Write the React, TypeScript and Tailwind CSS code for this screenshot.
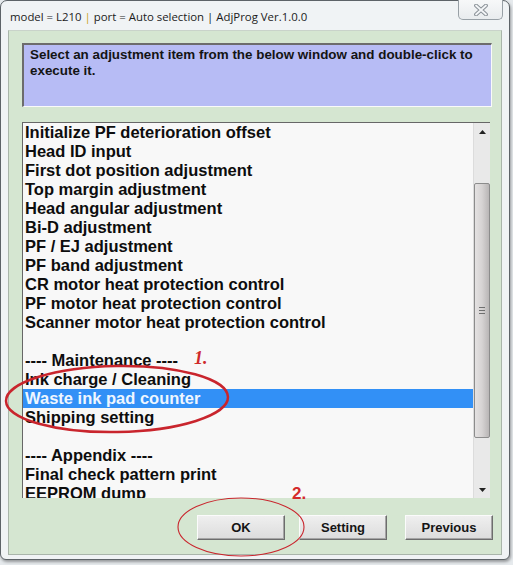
import React from 'react';

const items = [
  'Initialize PF deterioration offset',
  'Head ID input',
  'First dot position adjustment',
  'Top margin adjustment',
  'Head angular adjustment',
  'Bi-D adjustment',
  'PF / EJ adjustment',
  'PF band adjustment',
  'CR motor heat protection control',
  'PF motor heat protection control',
  'Scanner motor heat protection control',
  '',
  '---- Maintenance ----',
  'Ink charge / Cleaning',
  'Waste ink pad counter',
  'Shipping setting',
  '',
  '---- Appendix ----',
  'Final check pattern print',
  'EEPROM dump',
];

const SELECTED = 'Waste ink pad counter';

function CloseGlyph() {
  return (
    <svg width="16" height="12" viewBox="0 0 16 12">
      <path d="M3 1.5 L13 10.5 M13 1.5 L3 10.5" stroke="#8a9197" strokeWidth="3.8" strokeLinecap="round" />
      <path d="M3 1.5 L13 10.5 M13 1.5 L3 10.5" stroke="#f4f6f8" strokeWidth="1.8" strokeLinecap="round" />
    </svg>
  );
}

function Button({ label, className = '' }: { label: string; className?: string }) {
  return (
    <div
      className={`flex h-[25px] w-[88px] items-center justify-center border border-t-[#fbfbfb] border-l-[#fbfbfb] border-b-[#6d6d6d] border-r-[#6d6d6d] bg-gradient-to-b from-[#efefef] to-[#dcdcdc] text-[13px] font-bold text-[#151515] shadow-[inset_-1px_-1px_0_#a5a5a5] ${className}`}
    >
      {label}
    </div>
  );
}

export default function App() {
  return (
    <div
      className="relative h-[565px] w-[513px] overflow-hidden bg-[#e6eaed]"
      style={{ fontFamily: '"Liberation Sans", Arial, sans-serif' }}
    >
      {/* Window */}
      <div className="flex h-[560px] w-[510px] flex-col rounded-t-[7px] rounded-b-[6px] border border-[#5d6368] bg-[#f0f3f5] shadow-[1px_2px_3px_rgba(0,0,0,0.35)]">
        {/* Title bar */}
        <div className="flex h-[29px] items-start justify-between pl-[9px] pr-[6px]">
          <div
            className="pt-[9px] text-[11.4px] leading-[14px] text-[#1b1b1b]"
            style={{ fontFamily: '"Open Sans", "Noto Sans", sans-serif' }}
          >
            model = L210 <span className="text-[#c9a227]">|</span> port = Auto selection | AdjProg Ver.1.0.0
          </div>
          <div className="-mt-px flex h-[20px] w-[45px] items-center justify-center rounded-b-[5px] border border-t-0 border-[#98a0a6] bg-gradient-to-b from-[#f7f8f9] to-[#e9ecee]">
            <CloseGlyph />
          </div>
        </div>

        {/* Client area */}
        <div className="mx-[7px] mb-[4px] flex flex-1 flex-col border border-[#a9b5aa] border-t-[#c9d3ca] bg-[#d5e6d1]">
          {/* Info box */}
          <div className="ml-[13px] mt-[12px] h-[64px] w-[470px] border-l-2 border-t-2 border-b border-r border-l-[#6c6c6c] border-t-[#6c6c6c] border-b-[#fafafa] border-r-[#fafafa] bg-[#b7bcf5] pl-[6px] pr-[10px] pt-[2px]">
            <p className="text-[13.4px] font-bold leading-[15.5px] text-[#141414]">
              Select an adjustment item from the below window and double-click to execute it.
            </p>
          </div>

          {/* List box */}
          <div className="ml-[13px] mt-[15px] flex h-[376px] w-[468px] border-l border-t border-[#676767] bg-[#f8f8f8]">
            <div className="flex-1 overflow-hidden">
              {items.map((item, i) => (
                <div
                  key={i}
                  className={`h-[19px] whitespace-nowrap pl-[2px] text-[16.5px] font-bold leading-[19px] ${
                    item === SELECTED ? 'bg-[#3290f6] text-[#eef6ff]' : 'text-[#0d0d0d]'
                  }`}
                >
                  {item}
                </div>
              ))}
            </div>

            {/* Scrollbar */}
            <div className="flex w-[17px] flex-col border-l border-[#dcdcdc] bg-[#e9e9e9]">
              <div className="flex h-[17px] items-center justify-center">
                <svg width="7" height="4" viewBox="0 0 7 4">
                  <path d="M0 4 L3.5 0 L7 4 Z" fill="#222" />
                </svg>
              </div>
              <div className="h-[43px]" />
              <div className="flex h-[255px] items-center justify-center rounded-[2px] border border-[#8c8c8c] bg-gradient-to-r from-[#e4e2e2] via-[#d6d3d3] to-[#b9b6b6]">
                <div className="flex flex-col gap-[2px]">
                  <div className="h-px w-[6px] bg-[#6f6f6f]" />
                  <div className="h-px w-[6px] bg-[#6f6f6f]" />
                  <div className="h-px w-[6px] bg-[#6f6f6f]" />
                </div>
              </div>
              <div className="flex-1" />
              <div className="flex h-[17px] items-center justify-center">
                <svg width="7" height="4" viewBox="0 0 7 4">
                  <path d="M0 0 L3.5 4 L7 0 Z" fill="#222" />
                </svg>
              </div>
            </div>
          </div>

          {/* Buttons */}
          <div className="mt-[17px] flex justify-end pr-[8px]">
            <Button label="OK" />
            <Button label="Setting" className="ml-[14px]" />
            <Button label="Previous" className="ml-[18px]" />
          </div>
        </div>
      </div>

      {/* Red annotations */}
      <svg className="pointer-events-none absolute left-0 top-0" width="513" height="565" viewBox="0 0 513 565">
        <ellipse cx="117" cy="399" rx="111" ry="33" fill="none" stroke="#c9252d" strokeWidth="2.5" transform="rotate(-1 117 399)" />
        <ellipse cx="241" cy="527" rx="63" ry="29" fill="none" stroke="#c9252d" strokeWidth="1.1" />
      </svg>
      <span
        className="absolute left-[194px] top-[345px] text-[18px] font-bold italic text-[#cf2a2a]"
        style={{ fontFamily: '"Liberation Serif", serif' }}
      >
        1.
      </span>
      <span
        className="absolute left-[292px] top-[481px] text-[17px] font-bold text-[#d42a2a]"
        style={{ fontFamily: '"Liberation Sans", sans-serif' }}
      >
        2.
      </span>
    </div>
  );
}
